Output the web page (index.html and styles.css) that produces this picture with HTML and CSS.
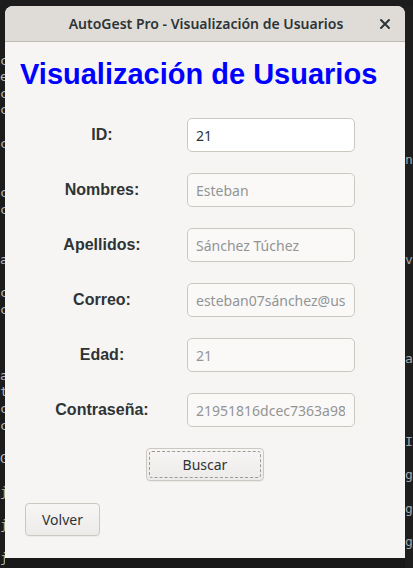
FILE: index.html
```html
<!DOCTYPE html>
<html lang="es">
<head>
<meta charset="utf-8">
<title>AutoGest Pro - Visualización de Usuarios</title>
<link rel="stylesheet" href="styles.css">
</head>
<body>
<div class="desktop">
  <div class="strip top"><span class="blue">ario</span></div>
  <pre class="strip side left-side">

ce
ex
co
co

co


co
co


a

co
co



a
t
co
co

G

j

j

j</pre>
  <div class="window">
    <header class="titlebar">
      <span class="title">AutoGest Pro - Visualización de Usuarios</span>
      <svg class="close" width="12" height="12" viewBox="0 0 12 12" aria-hidden="true">
        <path d="M2 2 L10 10 M10 2 L2 10" stroke="#2e3436" stroke-width="2" stroke-linecap="round"/>
      </svg>
    </header>
    <main class="content">
      <h1 class="heading">Visualización de Usuarios</h1>
      <div class="form">
        <label class="label">ID:</label>
        <div class="field active"><span class="val">21</span></div>
        <label class="label">Nombres:</label>
        <div class="field"><span class="val">Esteban</span></div>
        <label class="label">Apellidos:</label>
        <div class="field"><span class="val">Sánchez Túchez</span></div>
        <label class="label">Correo:</label>
        <div class="field"><span class="val">esteban07sánchez@usuario.com</span></div>
        <label class="label">Edad:</label>
        <div class="field"><span class="val">21</span></div>
        <label class="label">Contraseña:</label>
        <div class="field"><span class="val">21951816dcec7363a98e2f1a</span></div>
      </div>
      <div class="center">
        <button class="btn btn-buscar"><span class="focus">Buscar</span></button>
      </div>
      <div class="left">
        <button class="btn btn-volver">Volver</button>
      </div>
    </main>
  </div>
  <pre class="strip side right-side">







n





v:





ar




IT

gg

gg

gg</pre>
  <div class="strip bottom"></div>
</div>
</body>
</html>
```

FILE: styles.css
```css
html, body {
  margin: 0;
  padding: 0;
  background: #1b1b1b;
}

.desktop {
  width: 413px;
  height: 568px;
  overflow: hidden;
  background: #1c1c1c;
  display: grid;
  grid-template-columns: 5px 400px 8px;
  grid-template-rows: 6px 552px 10px;
}

.strip {
  overflow: hidden;
  margin: 0;
  font-family: "DejaVu Sans Mono", monospace;
  font-size: 13px;
  color: #b9b9b9;
}

.top {
  grid-column: 1 / 4;
  grid-row: 1;
  line-height: 6px;
  padding-left: 2px;
  display: flex;
  align-items: flex-end;
  border-bottom: 0;
}

.top .blue {
  color: #4a9ad8;
  font-size: 14px;
  line-height: 1;
  transform: translateY(-4px);
}

.side {
  grid-row: 2 / 4;
  white-space: pre;
  line-height: 16.6px;
  padding-top: 30px;
}

.left-side {
  grid-column: 1;
}

.right-side {
  grid-column: 3;
  color: #a9a9a9;
  background: #1e1e1e;
}

.bottom {
  grid-column: 2;
  grid-row: 3;
  background: #191919;
}

.window {
  grid-column: 2;
  grid-row: 2;
  display: flex;
  flex-direction: column;
  background: #f6f5f4;
  border-radius: 8px 8px 0 0;
  overflow: hidden;
}

.titlebar {
  height: 36px;
  flex: none;
  box-sizing: border-box;
  border-bottom: 1px solid #c0bab4;
  background: #dfdcd8;
  display: flex;
  align-items: center;
  justify-content: center;
  position: relative;
}

.title {
  font-family: "Noto Sans", sans-serif;
  font-weight: 600;
  font-size: 14px;
  color: #2e3436;
  margin-left: 2px;
}

.close {
  position: absolute;
  right: 14px;
  top: 12px;
}

.content {
  flex: 1;
  display: flex;
  flex-direction: column;
  padding: 16px 15px 0 15px;
}

.heading {
  margin: 0;
  font-family: "Liberation Sans", Arial, sans-serif;
  font-weight: 700;
  font-size: 29px;
  line-height: 33px;
  color: #0000ff;
}

.form {
  margin-top: 27px;
  display: grid;
  grid-template-columns: 164px 168px;
  column-gap: 3px;
  row-gap: 21px;
}

.label {
  display: flex;
  align-items: center;
  justify-content: center;
  font-family: "Liberation Sans", Arial, sans-serif;
  font-weight: 700;
  font-size: 16px;
  color: #2e3436;
  height: 34px;
}

.field {
  box-sizing: border-box;
  height: 34px;
  border: 1px solid #cdc7c2;
  border-radius: 5px;
  background: #faf9f8;
  padding: 0 9px 0 8px;
  display: flex;
  align-items: center;
  font-family: "Noto Sans", sans-serif;
  font-size: 14px;
  color: #929595;
}

.field .val {
  display: block;
  flex: 1;
  min-width: 0;
  overflow: hidden;
  white-space: nowrap;
}

.field.active {
  background: #ffffff;
  color: #2e3436;
}

.center {
  margin-top: 21px;
  display: flex;
  justify-content: center;
}

.left {
  margin-top: 22px;
  display: flex;
  padding-left: 5px;
}

.btn {
  box-sizing: border-box;
  height: 33px;
  border: 1px solid #cdc7c2;
  border-radius: 4px;
  background: linear-gradient(#f7f6f5, #edebe9);
  font-family: "Noto Sans", sans-serif;
  font-size: 14px;
  color: #2e3436;
  padding: 0;
  margin: 0;
  box-shadow: 0 1px 0 rgba(0, 0, 0, 0.04);
}

.btn-buscar {
  width: 118px;
  padding: 2px;
}

.btn-buscar .focus {
  display: flex;
  align-items: center;
  justify-content: center;
  height: 100%;
  box-sizing: border-box;
  border: 1px dashed #9a9a9a;
  border-radius: 3px;
}

.btn-volver {
  width: 75px;
}
```
